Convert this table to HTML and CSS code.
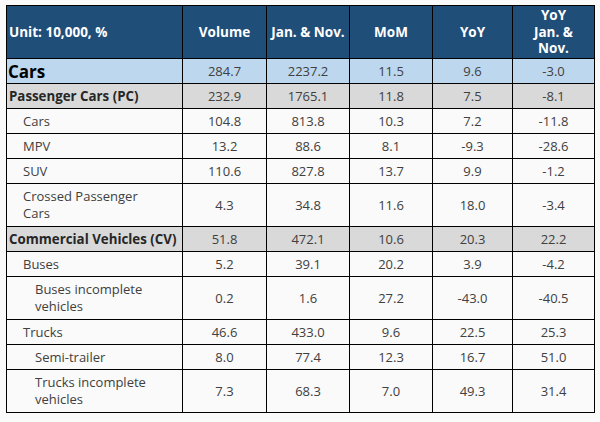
FILE: index.html
```html
<!DOCTYPE html>
<html>
<head>
<meta charset="utf-8">
<link rel="stylesheet" href="styles.css">
</head>
<body>
<table class="data">
  <colgroup>
    <col class="c-name"><col class="c-vol"><col class="c-jan"><col class="c-mom"><col class="c-yoy"><col class="c-yoyjan">
  </colgroup>
  <thead>
    <tr class="head">
      <th class="name">Unit: 10,000, %</th>
      <th>Volume</th>
      <th>Jan. &amp; Nov.</th>
      <th>MoM</th>
      <th>YoY</th>
      <th>YoY<br>Jan. &amp;<br>Nov.</th>
    </tr>
  </thead>
  <tbody>
    <tr class="total"><td class="name">Cars</td><td>284.7</td><td>2237.2</td><td>11.5</td><td>9.6</td><td>-3.0</td></tr>
    <tr class="group"><td class="name">Passenger Cars (PC)</td><td>232.9</td><td>1765.1</td><td>11.8</td><td>7.5</td><td>-8.1</td></tr>
    <tr><td class="name l1">Cars</td><td>104.8</td><td>813.8</td><td>10.3</td><td>7.2</td><td>-11.8</td></tr>
    <tr><td class="name l1">MPV</td><td>13.2</td><td>88.6</td><td>8.1</td><td>-9.3</td><td>-28.6</td></tr>
    <tr><td class="name l1">SUV</td><td>110.6</td><td>827.8</td><td>13.7</td><td>9.9</td><td>-1.2</td></tr>
    <tr class="tall"><td class="name l1">Crossed Passenger<br>Cars</td><td>4.3</td><td>34.8</td><td>11.6</td><td>18.0</td><td>-3.4</td></tr>
    <tr class="group"><td class="name">Commercial Vehicles (CV)</td><td>51.8</td><td>472.1</td><td>10.6</td><td>20.3</td><td>22.2</td></tr>
    <tr><td class="name l1">Buses</td><td>5.2</td><td>39.1</td><td>20.2</td><td>3.9</td><td>-4.2</td></tr>
    <tr class="tall"><td class="name l2">Buses incomplete<br>vehicles</td><td>0.2</td><td>1.6</td><td>27.2</td><td>-43.0</td><td>-40.5</td></tr>
    <tr><td class="name l1">Trucks</td><td>46.6</td><td>433.0</td><td>9.6</td><td>22.5</td><td>25.3</td></tr>
    <tr><td class="name l2">Semi-trailer</td><td>8.0</td><td>77.4</td><td>12.3</td><td>16.7</td><td>51.0</td></tr>
    <tr class="tall"><td class="name l2">Trucks incomplete<br>vehicles</td><td>7.3</td><td>68.3</td><td>7.0</td><td>49.3</td><td>31.4</td></tr>
  </tbody>
</table>
</body>
</html>
```
FILE: styles.css
```css
html, body {
  margin: 0;
  background: #fafafa;
}
body {
  padding: 5px 0 0 6px;
  font-family: "Open Sans", "Noto Sans", sans-serif;
  font-size: 13px;
  color: #404040;
}
.data {
  border-collapse: collapse;
  table-layout: fixed;
  width: 588px;
}
.c-name { width: 176px; }
.c-vol { width: 84px; }
.c-jan { width: 83px; }
.c-mom { width: 83px; }
.c-yoy { width: 80px; }
.c-yoyjan { width: 82px; }
.data th, .data td {
  border: 1px solid #000;
  text-align: center;
  padding: 0 2px;
  line-height: 17px;
}
.data td { height: 24px; }
.data tr.tall td { height: 42px; }
.head th {
  background: #1f4e79;
  color: #fff;
  font-weight: 700;
  font-size: 13.5px;
  height: 52px;
  line-height: 16.5px;
}
.head th.name { text-align: left; padding-left: 2px; }
.data td.name { text-align: left; padding-left: 2px; }
.data td.l1 { padding-left: 16px; }
.data td.l2 { padding-left: 28px; }
.total td { background: #bdd7ee; }
.total td.name { font-size: 17px; font-weight: 700; color: #000; padding-left: 1px; }
.group td { background: #d9d9d9; }
.group td.name { font-weight: 700; color: #262626; font-size: 13.3px; }
```
